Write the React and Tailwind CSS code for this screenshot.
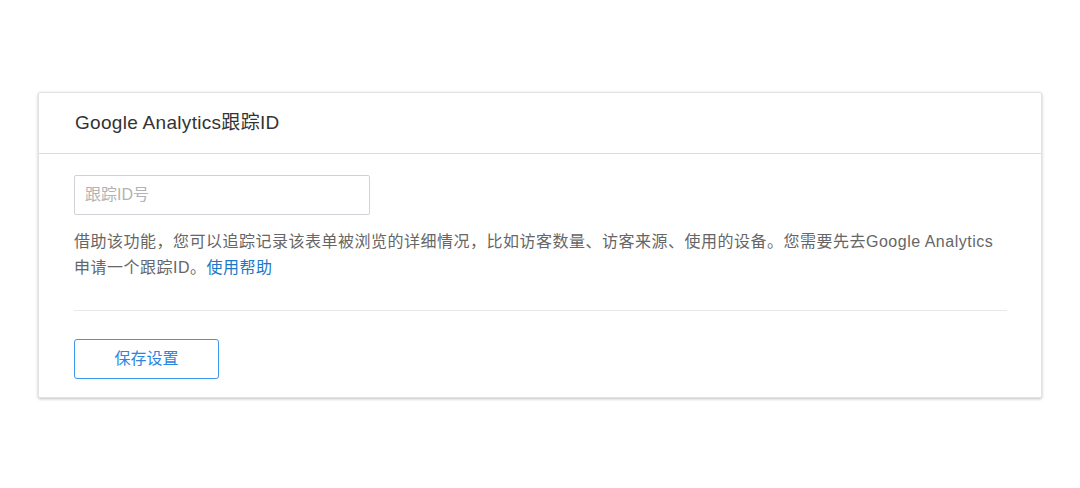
const font = { fontFamily: '"Liberation Sans", "Noto Sans CJK SC", sans-serif' };

export default function App() {
  return (
    <div className="min-h-[488px] bg-white pt-[92px]" style={font}>
      <div className="mx-[38px] w-[1004px] rounded-[2px] border border-[#e3e3e3] bg-white shadow-[0_1px_3px_rgba(0,0,0,0.25)]">
        <div className="flex h-[61px] items-center border-b border-[#dcdcdc] px-[36px]">
          <h2 className="text-[19px] text-[#333] tracking-[0.3px]">Google Analytics跟踪ID</h2>
        </div>
        <div className="pl-[35px] pr-[34px] pt-[21px] pb-[18px]">
          <input
            type="text"
            placeholder="跟踪ID号"
            className="block h-[40px] w-[296px] rounded-[2px] border border-[#cfd3d8] px-[10px] text-[16px] text-[#333] outline-none placeholder:text-[#b3b3b3]"
          />
          <p className="mt-[14px] text-[16px] leading-[26px] tracking-[0.5px] text-[#666]">
            借助该功能，您可以追踪记录该表单被浏览的详细情况，比如访客数量、访客来源、使用的设备。您需要先去Google Analytics申请一个跟踪ID。
            <a href="#" className="text-[#1a78c8]">使用帮助</a>
          </p>
          <div className="mt-[29px] border-t border-[#e8e8e8]" />
          <button className="mt-[28px] h-[40px] w-[145px] rounded-[3px] border border-[#3d97ee] text-[16px] text-[#2a86e0]">
            保存设置
          </button>
        </div>
      </div>
    </div>
  );
}
